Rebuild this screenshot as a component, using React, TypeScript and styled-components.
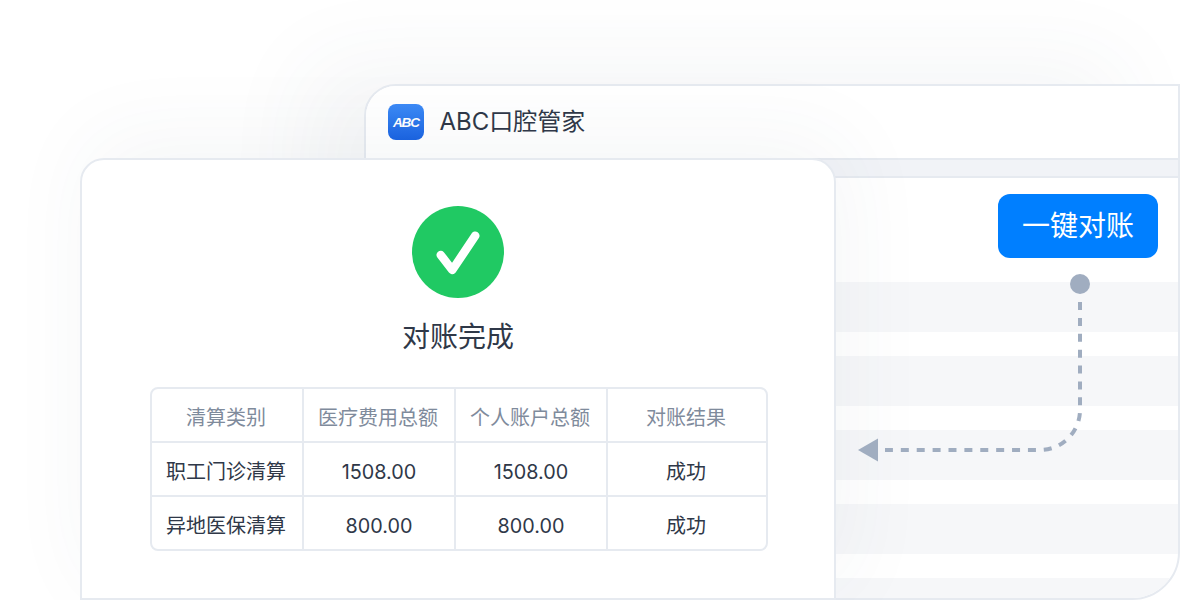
import React from "react";
import styled, { createGlobalStyle } from "styled-components";

const Global = createGlobalStyle`
  html, body { margin: 0; padding: 0; background: #fff; }
  body { font-family: Inter, "Noto Sans CJK SC", sans-serif; }
`;

const Stage = styled.div`
  position: relative;
  width: 1180px;
  height: 600px;
  overflow: hidden;
  background: #fff;
  padding: 84px 0 0 364px;
  box-sizing: border-box;
`;

const AppWindow = styled.section`
  width: 816px;
  height: 516px;
  box-sizing: border-box;
  border: 2px solid #e6eaf0;
  border-radius: 32px 0 48px 0;
  background: #fff;
  overflow: hidden;
  box-shadow: -60px -24px 90px rgba(60, 70, 90, 0.05);
  display: flex;
  flex-direction: column;
`;

const TitleBar = styled.header`
  height: 74px;
  flex: none;
  display: flex;
  align-items: center;
  gap: 15.5px;
  padding-left: 22px;
  box-sizing: border-box;
  background: #fff;
  border-bottom: 2px solid #e6eaf0;
`;

const Logo = styled.div`
  width: 36px;
  height: 36px;
  border-radius: 8px;
  background: linear-gradient(180deg, #3d8bf6, #1a64e2);
  display: flex;
  align-items: center;
  justify-content: center;
  color: #fff;
  font: italic 700 13.5px "Liberation Sans", sans-serif;
  letter-spacing: -1px;
`;

const AppName = styled.div`
  font-size: 24px;
  color: #2f3848;
  line-height: 32px;
`;

const Strip = styled.div`
  height: 16px;
  flex: none;
  background: #f1f3f7;
  border-bottom: 2px solid #e6eaf0;
`;

const Content = styled.div`
  flex: 1;
  padding: 16px 20px 0 0;
  display: flex;
  flex-direction: column;
  align-items: flex-end;
`;

const Action = styled.button`
  width: 160px;
  height: 64px;
  flex: none;
  border: 0;
  border-radius: 12px;
  padding: 0 0 4px;
  background: #007fff;
  color: #fff;
  font: 400 28px "Noto Sans CJK SC", sans-serif;
`;

const Rows = styled.div`
  margin: 24px -20px 0 0;
  align-self: stretch;
  display: flex;
  flex-direction: column;
  gap: 24px;
`;

const Row = styled.div`
  height: 50px;
  flex: none;
  background: #f6f7f9;
`;

const Card = styled.section`
  position: absolute;
  left: 80px;
  top: 158px;
  width: 756px;
  height: 442px;
  box-sizing: border-box;
  border: 2px solid #e6eaf0;
  border-radius: 24px 24px 0 0;
  background: #fff;
  box-shadow: 10px -18px 90px rgba(60, 70, 90, 0.05);
  display: flex;
  flex-direction: column;
  align-items: center;
  padding: 46px 0 0 0;
`;

const Heading = styled.h2`
  margin: 17px 0 32px;
  font: 400 28px/40px "Noto Sans CJK SC", sans-serif;
  color: #2f3848;
`;

const Table = styled.div`
  width: 618px;
  margin-left: 2px;
  box-sizing: border-box;
  border: 2px solid #e6eaf0;
  border-radius: 8px;
  display: grid;
  grid-template-columns: 152px 152px 152px 158px;
  grid-template-rows: 54px 54px 52px;
`;

const Cell = styled.div<{ $head?: boolean; $num?: boolean; $lastCol?: boolean; $lastRow?: boolean }>`
  display: flex;
  align-items: center;
  justify-content: center;
  box-sizing: border-box;
  padding: ${(p) => (p.$num ? "5px 0 0" : "2px 2px 0 0")};
  font-size: ${(p) => (p.$num ? "19.8px" : "20px")};
  color: ${(p) => (p.$head ? "#7f8b9c" : "#2f3848")};
  border-right: ${(p) => (p.$lastCol ? "0" : "2px solid #e6eaf0")};
  border-bottom: ${(p) => (p.$lastRow ? "0" : "2px solid #e6eaf0")};
`;

const Connector = styled.svg`
  position: absolute;
  left: 850px;
  top: 270px;
`;

const head = ["清算类别", "医疗费用总额", "个人账户总额", "对账结果"];
const body = [
  ["职工门诊清算", "1508.00", "1508.00", "成功"],
  ["异地医保清算", "800.00", "800.00", "成功"],
];

export default function App() {
  return (
    <Stage>
      <Global />
      <AppWindow>
        <TitleBar>
          <Logo>ABC</Logo>
          <AppName>ABC口腔管家</AppName>
        </TitleBar>
        <Strip />
        <Content>
          <Action>一键对账</Action>
          <Rows>
            {[0, 1, 2, 3, 4].map((i) => (
              <Row key={i} />
            ))}
          </Rows>
        </Content>
      </AppWindow>
      <Card>
        <svg width="92" height="92" viewBox="0 0 92 92">
          <circle cx="46" cy="46" r="46" fill="#20c963" />
          <path d="M28.7 49 L40.3 64 L63.3 29.7" fill="none" stroke="#fff" strokeWidth="8.5" strokeLinecap="round" strokeLinejoin="round" />
        </svg>
        <Heading>对账完成</Heading>
        <Table>
          {head.map((h, i) => (
            <Cell key={h} $head $lastCol={i === 3}>{h}</Cell>
          ))}
          {body.map((r, ri) =>
            r.map((c, i) => (
              <Cell key={ri + "-" + i} $num={i === 1 || i === 2} $lastCol={i === 3} $lastRow={ri === 1}>{c}</Cell>
            ))
          )}
        </Table>
      </Card>
      <Connector width="250" height="200" viewBox="850 270 250 200">
        <circle cx="1080" cy="284" r="10" fill="#a0adc0" />
        <path d="M1080 302 V410 A40 40 0 0 1 1040 450 H885" fill="none" stroke="#a0adc0" strokeWidth="4" strokeDasharray="8 7.89" />
        <path d="M858 450 L878 438.5 V461.5 Z" fill="#a0adc0" />
      </Connector>
    </Stage>
  );
}
